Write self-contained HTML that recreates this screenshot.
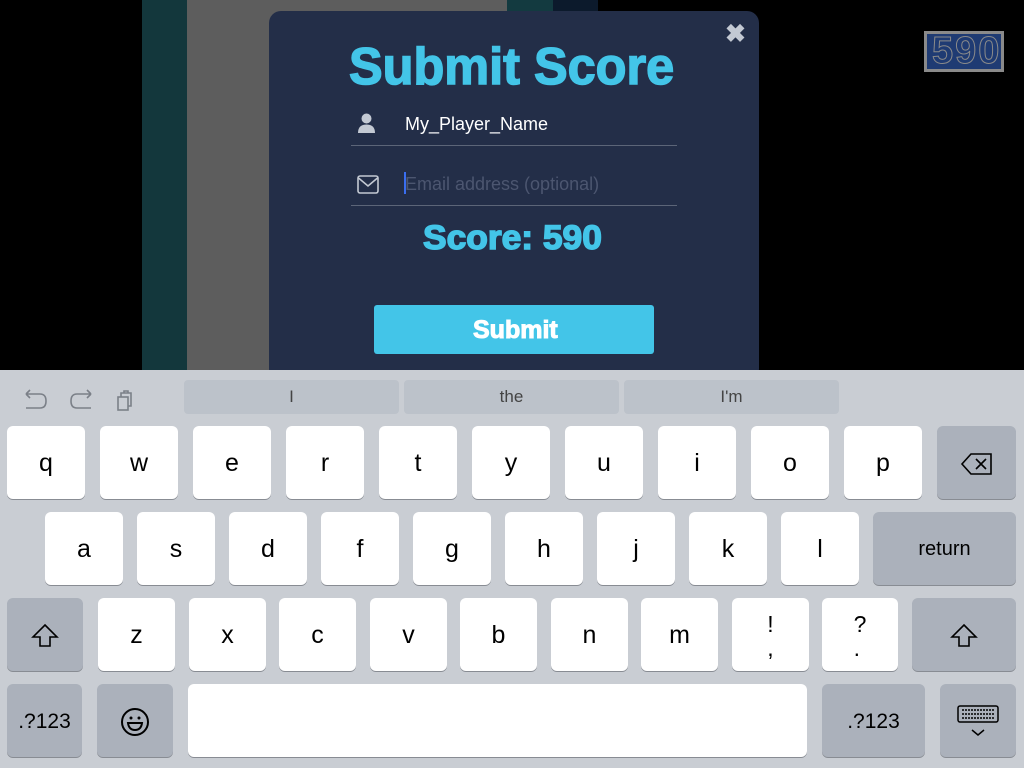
<!DOCTYPE html>
<html><head><meta charset="utf-8"><style>
*{margin:0;padding:0;box-sizing:border-box}
body{width:1024px;height:768px;overflow:hidden;background:#000;position:relative;font-family:"Liberation Sans",sans-serif}
.abs{position:absolute}
.modal{left:269px;top:11px;width:490px;height:370px;background:#232e48;border-radius:12px}
.px{font-family:"Liberation Sans",sans-serif;font-weight:bold;color:#43c5e8;white-space:nowrap;transform-origin:left top;-webkit-text-stroke:1.5px #43c5e8}
.kb{left:0;top:370px;width:1024px;height:398px;background:#c9cdd3}
.k{position:absolute;background:#fff;border-radius:6px;box-shadow:0 1px 0 #888c93;font-size:25px;color:#000;display:flex;align-items:center;justify-content:center;padding-top:2px}
.g{background:#abb1bb}
.sug{position:absolute;top:380px;height:34px;background:#bcc2ca;border-radius:4px;color:#444;font-size:17px;display:flex;align-items:center;justify-content:center}
</style></head><body>
<div class="abs" style="left:142px;top:0;width:45px;height:370px;background:#13373c"></div>
<div class="abs" style="left:187px;top:0;width:320px;height:370px;background:#5d5d5d"></div>
<div class="abs" style="left:507px;top:0;width:46px;height:370px;background:#133a40"></div>
<div class="abs" style="left:553px;top:0;width:45px;height:370px;background:#0c1a2c"></div>
<div class="abs" style="left:924px;top:31px;width:80px;height:41px;background:#8a8a8a"></div>
<div class="abs" style="left:927px;top:34px;width:74px;height:35px;background:#1f3b73"></div>
<div class="abs" style="left:932px;top:31px;font-size:38px;font-weight:bold;color:#1f3b73;-webkit-text-stroke:1px #8a8a8a;letter-spacing:2px;line-height:40px">590</div>

<div class="abs modal"></div>
<div class="abs" style="left:725px;top:20px;font-size:25px;font-weight:bold;color:#c3c9d3;line-height:28px">✖</div>
<div class="abs px" style="left:349px;top:38px;font-size:52px;line-height:58px;transform:scaleX(0.97)">Submit Score</div>
<svg class="abs" style="left:357px;top:113px" width="19" height="21" viewBox="0 0 19 21"><circle cx="9.5" cy="5.5" r="5" fill="#c3c9d3"/><path d="M1 20 Q1 11.5 9.5 11.5 Q18 11.5 18 20Z" fill="#c3c9d3"/></svg>
<div class="abs" style="left:405px;top:114px;font-size:18px;color:#fff">My_Player_Name</div>
<div class="abs" style="left:351px;top:145px;width:326px;height:1px;background:#5c6578"></div>
<svg class="abs" style="left:357px;top:175px" width="22" height="19" viewBox="0 0 22 19"><rect x="1" y="1" width="20" height="17" rx="2" fill="none" stroke="#c3c9d3" stroke-width="1.6"/><path d="M1.5 3 L11 11 L20.5 3" fill="none" stroke="#c3c9d3" stroke-width="1.6"/></svg>
<div class="abs" style="left:404px;top:172px;width:2px;height:22px;background:#3a6ef0"></div>
<div class="abs" style="left:405px;top:174px;font-size:18px;color:#4c5670">Email address (optional)</div>
<div class="abs" style="left:351px;top:205px;width:326px;height:1px;background:#5c6578"></div>
<div class="abs px" style="left:423px;top:220px;font-size:34px;line-height:36px;transform:scaleX(1.04)">Score: 590</div>
<div class="abs" style="left:374px;top:305px;width:280px;height:49px;background:#43c5e8;border-radius:3px"></div>
<div class="abs px" style="left:473px;top:315px;font-size:25px;color:#fff;-webkit-text-stroke:1px #fff;line-height:30px">Submit</div>

<div class="abs kb"></div>
<svg class="abs" style="left:22px;top:388px" width="125" height="26" viewBox="0 0 125 26" fill="none" stroke="#7b8088" stroke-width="1.6"><path d="M4 6 L8 2 M4 6 L8 10 M4 6 H18 Q24 6 24 13 Q24 20 18 20 H4"/><path d="M69 6 L65 2 M69 6 L65 10 M69 6 H55 Q49 6 49 13 Q49 20 55 20 H69"/><rect x="96" y="9" width="10" height="13"/><path d="M99 9 V5 H109 V18 H106 M102 5 V3 H106 V5"/></svg>
<div class="sug" style="left:184px;width:215px">I</div>
<div class="sug" style="left:404px;width:215px">the</div>
<div class="sug" style="left:624px;width:215px">I'm</div>

<div class="k" style="left:7px;top:426px;width:78px;height:73px">q</div>
<div class="k" style="left:100px;top:426px;width:78px;height:73px">w</div>
<div class="k" style="left:193px;top:426px;width:78px;height:73px">e</div>
<div class="k" style="left:286px;top:426px;width:78px;height:73px">r</div>
<div class="k" style="left:379px;top:426px;width:78px;height:73px">t</div>
<div class="k" style="left:472px;top:426px;width:78px;height:73px">y</div>
<div class="k" style="left:565px;top:426px;width:78px;height:73px">u</div>
<div class="k" style="left:658px;top:426px;width:78px;height:73px">i</div>
<div class="k" style="left:751px;top:426px;width:78px;height:73px">o</div>
<div class="k" style="left:844px;top:426px;width:78px;height:73px">p</div>
<div class="k g" style="left:937px;top:426px;width:79px;height:73px"><svg width="34" height="24" viewBox="0 0 34 24" fill="none" stroke="#000" stroke-width="1.6"><path d="M11 2 H31 V22 H11 L2 12 Z"/><path d="M16 7 L26 17 M26 7 L16 17"/></svg></div>

<div class="k" style="left:45px;top:512px;width:78px;height:73px">a</div>
<div class="k" style="left:137px;top:512px;width:78px;height:73px">s</div>
<div class="k" style="left:229px;top:512px;width:78px;height:73px">d</div>
<div class="k" style="left:321px;top:512px;width:78px;height:73px">f</div>
<div class="k" style="left:413px;top:512px;width:78px;height:73px">g</div>
<div class="k" style="left:505px;top:512px;width:78px;height:73px">h</div>
<div class="k" style="left:597px;top:512px;width:78px;height:73px">j</div>
<div class="k" style="left:689px;top:512px;width:78px;height:73px">k</div>
<div class="k" style="left:781px;top:512px;width:78px;height:73px">l</div>
<div class="k g" style="left:873px;top:512px;width:143px;height:73px;font-size:20px">return</div>

<div class="k g" style="left:7px;top:598px;width:76px;height:73px"><svg width="28" height="26" viewBox="0 0 28 26" fill="none" stroke="#000" stroke-width="1.6"><path d="M14 2 L26 14 H19 V23 H9 V14 H2 Z"/></svg></div>
<div class="k" style="left:98px;top:598px;width:77px;height:73px">z</div>
<div class="k" style="left:189px;top:598px;width:77px;height:73px">x</div>
<div class="k" style="left:279px;top:598px;width:77px;height:73px">c</div>
<div class="k" style="left:370px;top:598px;width:77px;height:73px">v</div>
<div class="k" style="left:460px;top:598px;width:77px;height:73px">b</div>
<div class="k" style="left:551px;top:598px;width:77px;height:73px">n</div>
<div class="k" style="left:641px;top:598px;width:77px;height:73px">m</div>
<div class="k" style="left:732px;top:598px;width:77px;height:73px;flex-direction:column;line-height:24px;font-size:23px">!<br>,</div>
<div class="k" style="left:822px;top:598px;width:76px;height:73px;flex-direction:column;line-height:24px;font-size:23px">?<br>.</div>
<div class="k g" style="left:912px;top:598px;width:104px;height:73px"><svg width="28" height="26" viewBox="0 0 28 26" fill="none" stroke="#000" stroke-width="1.6"><path d="M14 2 L26 14 H19 V23 H9 V14 H2 Z"/></svg></div>

<div class="k g" style="left:7px;top:684px;width:75px;height:73px;font-size:21px">.?123</div>
<div class="k g" style="left:97px;top:684px;width:76px;height:73px"><svg width="30" height="30" viewBox="0 0 30 30" fill="none" stroke="#000" stroke-width="2"><circle cx="15" cy="15" r="13"/><circle cx="11" cy="11" r="1.5" fill="#000" stroke="none"/><circle cx="19" cy="11" r="1.5" fill="#000" stroke="none"/><path d="M8 16 H22 Q21 23 15 23 Q9 23 8 16Z"/></svg></div>
<div class="k" style="left:188px;top:684px;width:619px;height:73px"></div>
<div class="k g" style="left:822px;top:684px;width:103px;height:73px;font-size:21px">.?123</div>
<div class="k g" style="left:940px;top:684px;width:76px;height:73px"><svg width="42" height="34" viewBox="0 0 42 34" fill="none" stroke="#000" stroke-width="1.5"><rect x="1" y="1" width="40" height="16" rx="2"/><path d="M5 5 H37 M5 9 H37 M5 13 H37" stroke-dasharray="2 1"/><path d="M15 25 L21 30 L27 25"/></svg></div>
</body></html>
